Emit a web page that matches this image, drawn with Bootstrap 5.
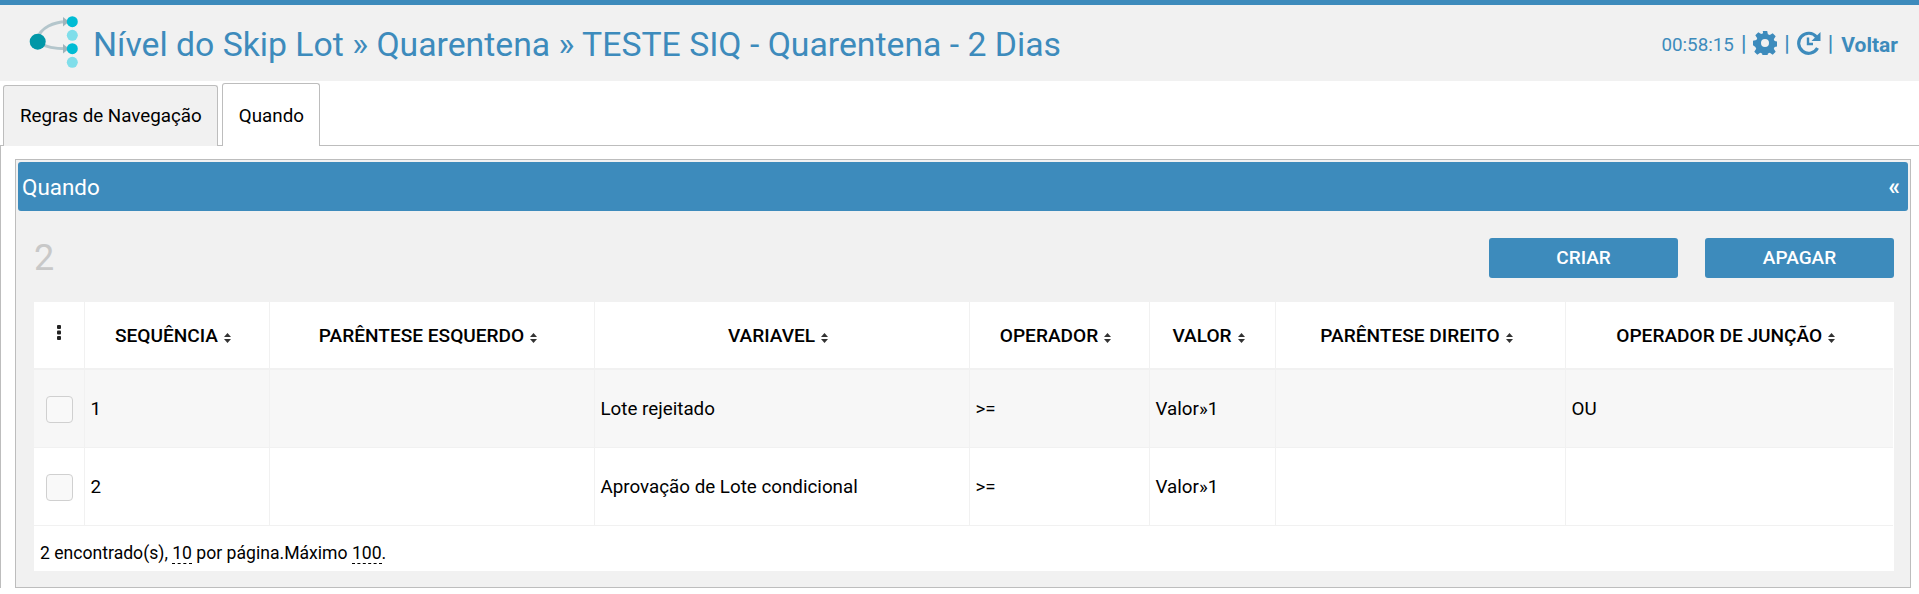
<!DOCTYPE html>
<html lang="pt-BR">
<head>
    <meta charset="UTF-8">
    <title>Quando</title>
    <link href="https://cdn.jsdelivr.net/npm/bootstrap@5.3.0/dist/css/bootstrap.min.css" rel="stylesheet">
    <style>
        body {
            background-color: #fff;
            color: #000;
            font-family: Roboto, "Liberation Sans", sans-serif;
            font-size: 18.8px;
        }

        .top-head {
            height: 81px;
            background-color: #f1f1f1;
            border-top: 5px solid #3d8bbc;
            color: #3d8bbc;
            padding: 0 21px 0 28px;
        }

        .top-logo {
            width: 56px;
            height: 56px;
            margin-right: 9px;
        }

        .top-title {
            font-size: 33.75px;
            font-weight: 400;
            line-height: 1;
            margin: 0;
            padding-top: 3px;
        }

        .top-tools {
            font-size: 18.8px;
            gap: 7px;
        }

        .tool-txt {
            padding-top: 5px;
        }

        .tool-bar {
            font-size: 22px;
            font-weight: 500;
            line-height: 1;
            padding-top: 2px;
        }

        .top-tools b {
            font-size: 21px;
            font-weight: 700;
            padding-top: 5px;
            margin-left: 1px;
        }

        .tab-bar {
            height: 65px;
            padding: 2px 0 0 3px;
            border-bottom: 1px solid #bdbdbd;
            gap: 4px;
        }

        .tab-item {
            display: flex;
            align-items: center;
            height: 63px;
            padding: 3px 15px 0 16px;
            border: 1px solid #bdbdbd;
            border-bottom: 0;
            border-radius: 3px 3px 0 0;
            background-color: #fff;
            color: #000;
            text-decoration: none;
        }

        .tab-off {
            height: 61px;
            margin-top: 2px;
            padding-top: 1px;
            background-color: #f1f1f1;
        }

        .tab-pane-box {
            border-left: 1px solid #bdbdbd;
            padding: 13px 8px 0 14px;
        }

        .panel-box {
            height: 429px;
            background-color: #f1f1f1;
            border: 1px solid #bdbdbd;
            padding: 2px;
        }

        .panel-head {
            height: 49px;
            background-color: #3d8bbc;
            color: #fff;
            border-radius: 3px;
            font-size: 22.4px;
            padding: 2px 8px 0 4px;
        }

        .panel-fold {
            font-size: 23px;
            font-weight: 700;
            line-height: 1;
        }

        .panel-tools {
            padding: 27px 14px 0 16px;
            height: 91px;
        }

        .panel-count {
            font-size: 36px;
            line-height: 40px;
            color: #c8c8c8;
        }

        .btn-blue {
            width: 189px;
            height: 40px;
            background-color: #3d8bbc;
            color: #fff;
            font-weight: 500;
            font-size: 19px;
            border-radius: 3px;
            border: 0;
            padding: 0;
        }

        .btn-gap {
            gap: 27px;
        }

        .grid-wrap {
            margin: 0 14px 0 16px;
            background-color: #fff;
        }

        .grid-table {
            table-layout: fixed;
            width: calc(100% - 1px);
            border-collapse: collapse;
            margin: 0;
        }

        .grid-table th {
            height: 67px;
            font-size: 19.1px;
            font-weight: 500;
            text-align: center;
            padding: 3px 12px 0 5px;
            border-right: 1px solid #f1f1f1;
            border-bottom: 2px solid #f1f1f1;
            white-space: nowrap;
        }

        .grid-table td {
            height: 78px;
            padding: 2px 5px 0 6px;
            border-right: 1px solid #f1f1f1;
            border-bottom: 1px solid #f1f1f1;
        }

        .grid-table th:first-child {
            padding: 0;
        }

        .grid-table th:last-child,
        .grid-table td:last-child {
            border-right: 0;
        }

        .row-odd td {
            background-color: #f7f7f7;
        }

        .fake-check {
            display: block;
            width: 27px;
            height: 27px;
            margin: 0 auto;
            background-color: #f9f9f9;
            border: 1px solid #d0d0d0;
            border-radius: 4px;
        }

        .sort-mark {
            display: inline-block;
            width: 7px;
            height: 10px;
            margin-left: 6px;
            vertical-align: -1px;
        }

        .dots-mark {
            display: block;
            width: 6px;
            height: 15px;
            margin: 0 auto 6px;
        }

        .grid-foot {
            height: 45px;
            padding: 10px 6px 0;
            font-size: 17.6px;
        }

        .dash-num {
            border-bottom: 1px dashed #000;
        }
    </style>
</head>
<body>
<header class="top-head d-flex align-items-center">
    <svg class="top-logo" viewBox="0 0 56 56">
        <path d="M9 24 C13 12 26 7 38 6.700" fill="none" stroke="#b4c6cc" stroke-width="3"/>
        <path d="M35 2 L41 6.700 L35 11.400 Z" fill="#9fb4bb"/>
        <path d="M11 28 C18 32 28 33.700 38 33.700" fill="none" stroke="#b4c6cc" stroke-width="3"/>
        <path d="M35 29 L41 33.700 L35 38.400 Z" fill="#9fb4bb"/>
        <circle cx="9.700" cy="26.700" r="8" fill="#0097a7"/>
        <circle cx="44.300" cy="6.700" r="5.500" fill="#00bcd4"/>
        <circle cx="44.300" cy="20.300" r="5.500" fill="#80deea"/>
        <circle cx="44.300" cy="33.700" r="5.500" fill="#00bcd4"/>
        <circle cx="44.300" cy="47.300" r="5.500" fill="#80deea"/>
    </svg>
    <h1 class="top-title">Nível do Skip Lot » Quarentena » TESTE SIQ - Quarentena - 2 Dias</h1>
    <div class="top-tools ms-auto d-flex align-items-center">
        <span class="tool-txt">00:58:15</span><span class="tool-bar">|</span>
        <svg width="24" height="24" viewBox="0 0 24 24" fill="#3d8bbc">
            <path fill-rule="evenodd" d="M9.800 0h4.400l.7 3.300 1.900.8 2.900-1.800 3 3-1.900 2.900.8 1.900 3.400.7v4.400l-3.400.7-.8 1.900 1.900 2.900-3 3-2.900-1.900-1.900.8-.7 3.400H9.800l-.7-3.400-1.900-.8-2.900 1.900-3-3 1.900-2.900-.8-1.900L0 14.200V9.800l3.400-.7.8-1.900-1.900-2.900 3-3 2.900 1.800 1.900-.8zM12 8a4 4 0 1 0 0 8 4 4 0 0 0 0-8z"/>
        </svg>
        <span class="tool-bar">|</span>
        <svg width="24" height="24" viewBox="0 0 24 24" fill="none" stroke="#3d8bbc">
            <path d="M20.500 17a10 10 0 1 1 -1 -11" stroke-width="3.200"/>
            <path d="M23.500 1v9h-9z" fill="#3d8bbc" stroke="none"/>
            <path d="M11 6.500v6.500h5" stroke-width="2.400"/>
        </svg>
        <span class="tool-bar">|</span>
        <b>Voltar</b>
    </div>
</header>

<nav class="tab-bar d-flex">
    <a class="tab-item tab-off" href="#">Regras de Navegação</a>
    <a class="tab-item" href="#">Quando</a>
</nav>

<main class="tab-pane-box">
    <section class="panel-box">
        <div class="panel-head d-flex justify-content-between align-items-center">
            <span>Quando</span><span class="panel-fold">«</span>
        </div>
        <div class="panel-tools d-flex justify-content-between align-items-start">
            <span class="panel-count">2</span>
            <div class="d-flex btn-gap">
                <button class="btn-blue" type="button">CRIAR</button>
                <button class="btn-blue" type="button">APAGAR</button>
            </div>
        </div>
        <div class="grid-wrap">
            <table class="grid-table">
                <colgroup>
                    <col style="width: 50px">
                    <col style="width: 185px">
                    <col style="width: 325px">
                    <col style="width: 375px">
                    <col style="width: 180px">
                    <col style="width: 126px">
                    <col style="width: 290px">
                    <col>
                </colgroup>
                <thead>
                <tr>
                    <th>
                        <svg class="dots-mark" viewBox="0 0 6 15" fill="#222"><rect x="1" y="0" width="4" height="4" rx="1"/><rect x="1" y="5.500" width="4" height="4" rx="1"/><rect x="1" y="11" width="4" height="4" rx="1"/></svg>
                    </th>
                    <th>SEQUÊNCIA<svg class="sort-mark" viewBox="0 0 7 10" fill="#333"><path d="M3.500 0 7 4H0zM3.500 10 0 6h7z"/></svg></th>
                    <th>PARÊNTESE ESQUERDO<svg class="sort-mark" viewBox="0 0 7 10" fill="#333"><path d="M3.500 0 7 4H0zM3.500 10 0 6h7z"/></svg></th>
                    <th>VARIAVEL<svg class="sort-mark" viewBox="0 0 7 10" fill="#333"><path d="M3.500 0 7 4H0zM3.500 10 0 6h7z"/></svg></th>
                    <th>OPERADOR<svg class="sort-mark" viewBox="0 0 7 10" fill="#333"><path d="M3.500 0 7 4H0zM3.500 10 0 6h7z"/></svg></th>
                    <th>VALOR<svg class="sort-mark" viewBox="0 0 7 10" fill="#333"><path d="M3.500 0 7 4H0zM3.500 10 0 6h7z"/></svg></th>
                    <th>PARÊNTESE DIREITO<svg class="sort-mark" viewBox="0 0 7 10" fill="#333"><path d="M3.500 0 7 4H0zM3.500 10 0 6h7z"/></svg></th>
                    <th>OPERADOR DE JUNÇÃO<svg class="sort-mark" viewBox="0 0 7 10" fill="#333"><path d="M3.500 0 7 4H0zM3.500 10 0 6h7z"/></svg></th>
                </tr>
                </thead>
                <tbody>
                <tr class="row-odd">
                    <td><span class="fake-check"></span></td>
                    <td>1</td>
                    <td></td>
                    <td>Lote rejeitado</td>
                    <td>&gt;=</td>
                    <td>Valor»1</td>
                    <td></td>
                    <td>OU</td>
                </tr>
                <tr>
                    <td><span class="fake-check"></span></td>
                    <td>2</td>
                    <td></td>
                    <td>Aprovação de Lote condicional</td>
                    <td>&gt;=</td>
                    <td>Valor»1</td>
                    <td></td>
                    <td></td>
                </tr>
                </tbody>
            </table>
            <div class="grid-foot d-flex align-items-center">
                <span>2 encontrado(s), <span class="dash-num">10</span> por página.Máximo <span class="dash-num">100</span>.</span>
            </div>
        </div>
    </section>
</main>

<script src="https://cdn.jsdelivr.net/npm/bootstrap@5.3.0/dist/js/bootstrap.bundle.min.js"></script>
</body>
</html>
